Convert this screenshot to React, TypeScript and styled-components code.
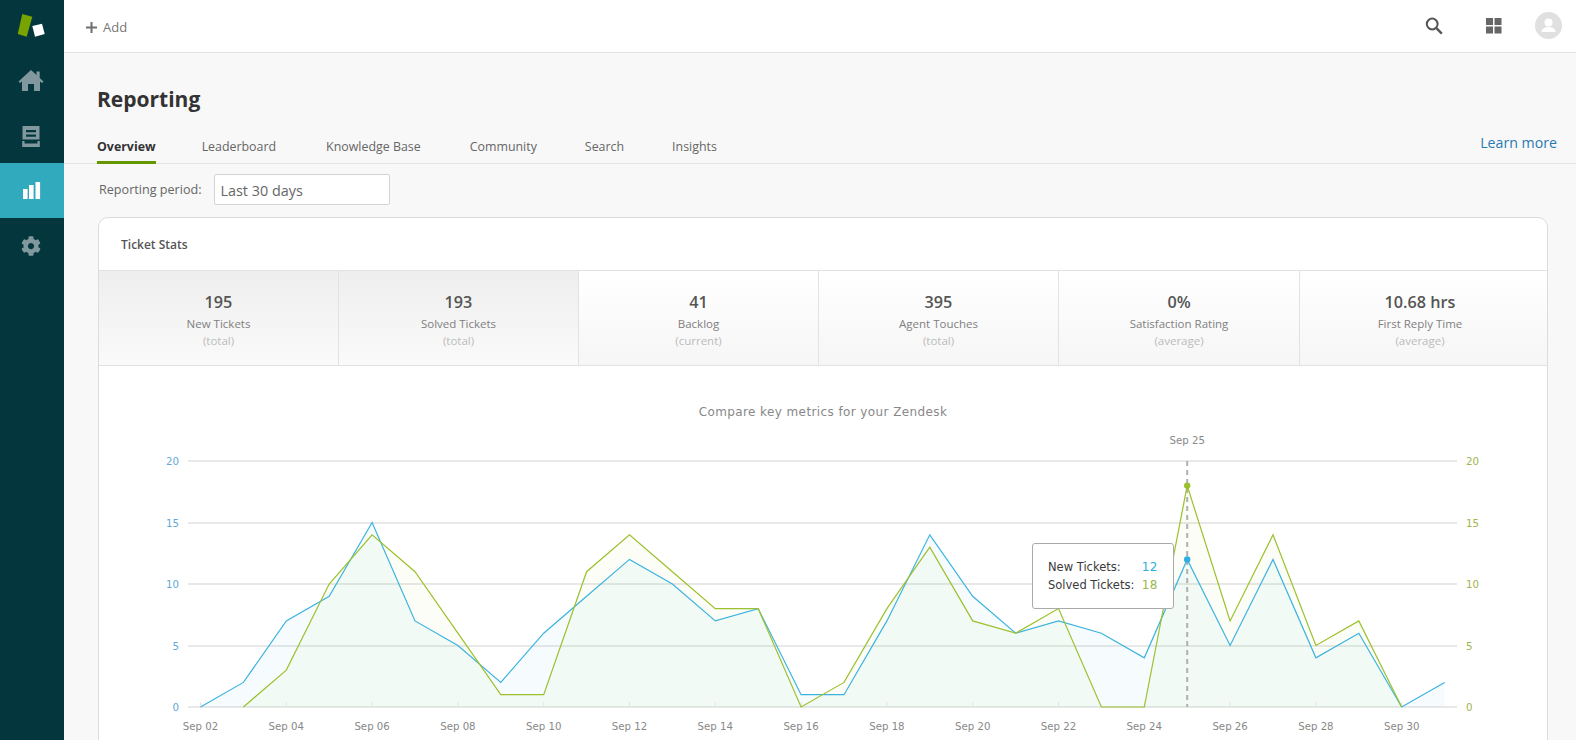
import styled, { createGlobalStyle } from 'styled-components';
import { FaCog } from 'react-icons/fa';

const TABS = ['Overview', 'Leaderboard', 'Knowledge Base', 'Community', 'Search', 'Insights'];

const STATS = [
	{ value: '195', label: 'New Tickets', note: '(total)', active: true },
	{ value: '193', label: 'Solved Tickets', note: '(total)', active: true },
	{ value: '41', label: 'Backlog', note: '(current)', active: false },
	{ value: '395', label: 'Agent Touches', note: '(total)', active: false },
	{ value: '0%', label: 'Satisfaction Rating', note: '(average)', active: false },
	{ value: '10.68 hrs', label: 'First Reply Time', note: '(average)', active: false },
];

// daily values, index 0 is Sep 02
const NEW_TICKETS = [0, 2, 7, 9, 15, 7, 5, 2, 6, 9, 12, 10, 7, 8, 1, 1, 7, 14, 9, 6, 7, 6, 4, 12, 5, 12, 4, 6, 0, 2];
const SOLVED_TICKETS = [0, 3, 10, 14, 11, 6, 1, 1, 11, 14, 11, 8, 8, 0, 2, 8, 13, 7, 6, 8, 0, 0, 18, 7, 14, 5, 7, 0];

const X0 = 101.5;
const STEP = 42.9;
const Y0 = 282;
const UNIT = 12.3;
const GRID_LEFT = 89;
const GRID_RIGHT = 1358;

const BLUE = '#3cb3de';
const GREEN = '#9cc02e';

const xAt = (i: number) => X0 + i * STEP;
const yAt = (v: number) => Y0 - v * UNIT;

function linePoints(values: number[], start: number) {
	return values.map((v, i) => `${xAt(start + i).toFixed(1)},${yAt(v).toFixed(1)}`).join(' ');
}

function areaPoints(values: number[], start: number) {
	const last = start + values.length - 1;
	return `${xAt(start)},${Y0} ${linePoints(values, start)} ${xAt(last)},${Y0}`;
}

function Chart() {
	return (
		<ChartSvg viewBox='0 0 1447 320'>
			{[0, 5, 10, 15, 20].map((v) => (
				<g key={v}>
					<line
						x1={GRID_LEFT}
						x2={GRID_RIGHT}
						y1={Math.round(yAt(v))}
						y2={Math.round(yAt(v))}
						stroke='#e8e8e8'
						strokeWidth='2'
					/>
					<AxisText x={80} y={yAt(v) + 4} textAnchor='end' fill='#62a9d6'>
						{v}
					</AxisText>
					<AxisText x={1367} y={yAt(v) + 4} fill='#9db54c'>
						{v}
					</AxisText>
				</g>
			))}
			<polygon points={areaPoints(NEW_TICKETS, 0)} fill='#23afeb' fillOpacity='0.045' />
			<polygon points={areaPoints(SOLVED_TICKETS, 1)} fill='#a0c022' fillOpacity='0.04' />
			{NEW_TICKETS.map((_, i) =>
				i % 2 === 0 ? (
					<g key={i}>
						<line x1={xAt(i)} x2={xAt(i)} y1={Y0 - 5} y2={Y0} stroke='#e4e4e4' />
						{i < 30 && (
							<AxisText x={xAt(i)} y={Y0 + 23} textAnchor='middle' fill='#888'>
								{`Sep ${String(i + 2).padStart(2, '0')}`}
							</AxisText>
						)}
					</g>
				) : null,
			)}
			<line x1={xAt(23)} x2={xAt(23)} y1={yAt(20)} y2={Y0} stroke='#b0b0b0' strokeWidth='2' strokeDasharray='5 4' />
			<polyline points={linePoints(NEW_TICKETS, 0)} fill='none' stroke={BLUE} strokeWidth='1.2' />
			<polyline points={linePoints(SOLVED_TICKETS, 1)} fill='none' stroke={GREEN} strokeWidth='1.2' />
			<circle cx={xAt(23)} cy={yAt(18)} r='3.2' fill={GREEN} />
			<circle cx={xAt(23)} cy={yAt(12)} r='3.2' fill='#2eaee0' />
			<AxisText x={xAt(23)} y={19} textAnchor='middle' fill='#888'>
				Sep 25
			</AxisText>
		</ChartSvg>
	);
}

function LogoMark() {
	return (
		<svg width='64' height='50' viewBox='0 0 64 50'>
			<polygon points='22.3,14 32.3,16.7 26.7,36.7 17.7,34' fill='#78a300' />
			<polygon points='32.3,26 42,23.7 44.7,34 35,36.7' fill='#fff' />
		</svg>
	);
}

export default function App() {
	return (
		<Shell>
			<GlobalStyle />
			<Rail>
				<LogoSlot>
					<LogoMark />
				</LogoSlot>
				<RailItem>
					<svg width='26' height='24' viewBox='0 0 26 24' fill='#81999e'>
						<path d='M13 1l5.5 5V2.5h3.2V9L25.5 12.4 24 14l-2-1.6V22h-6v-7h-6v7H4v-9.600L2 14 .5 12.4z' />
					</svg>
				</RailItem>
				<RailItem>
					<svg width='20' height='24' viewBox='0 0 20 24' fill='#81999e'>
						<path
							fillRule='evenodd'
							d='M1.500 2h17v13.500h-17zM5 6h10v2.200H5zM5 10.500h10v2.200H5z'
						/>
						<path d='M1.200 17h2.300v2.500h13V17h2.300v6H1.200z' />
					</svg>
				</RailItem>
				<RailItem $active>
					<svg width='20' height='20' viewBox='0 0 20 20' fill='#fff'>
						<rect x='2' y='9' width='4.600' height='10' />
						<rect x='8' y='5' width='4.600' height='14' />
						<rect x='14.500' y='2' width='4.600' height='17' />
					</svg>
				</RailItem>
				<RailItem>
					<GearSlot>
						<FaCog size={20} color='#81999e' />
					</GearSlot>
				</RailItem>
			</Rail>
			<Main>
				<TopBar>
					<AddButton>
						<svg width='11' height='11' viewBox='0 0 11 11' fill='#6f6f6f'>
							<rect x='4.500' width='2' height='11' />
							<rect y='4.500' width='11' height='2' />
						</svg>
						Add
					</AddButton>
					<TopActions>
						<svg width='20' height='20' viewBox='0 0 20 20' fill='none' stroke='#555'>
							<circle cx='8.200' cy='8' r='5.400' strokeWidth='2' />
							<line x1='12.400' y1='12.200' x2='17.800' y2='17.600' strokeWidth='2.400' />
						</svg>
						<GridIcon width='16' height='16' viewBox='0 0 16 16' fill='#666'>
							<rect width='7' height='7' />
							<rect x='8.500' width='7' height='7' />
							<rect y='8.500' width='7' height='7' />
							<rect x='8.500' y='8.500' width='7' height='7' />
						</GridIcon>
						<Avatar>
							<svg width='27' height='27' viewBox='0 0 27 27' fill='#fff'>
								<circle cx='13.500' cy='10.500' r='4' />
								<path d='M6.500 20c0-3.500 3.500-5 7-5s7 1.500 7 5z' />
							</svg>
						</Avatar>
					</TopActions>
				</TopBar>
				<Title>Reporting</Title>
				<TabRow>
					{TABS.map((tab, idx) => (
						<Tab key={tab} $active={idx === 0}>
							{tab}
						</Tab>
					))}
					<LearnMore>Learn more</LearnMore>
				</TabRow>
				<PeriodRow>
					<PeriodLabel>Reporting period:</PeriodLabel>
					<PeriodSelect>Last 30 days</PeriodSelect>
				</PeriodRow>
				<Card>
					<CardHeading>Ticket Stats</CardHeading>
					<StatsRow>
						{STATS.map((stat) => (
							<StatCell key={stat.label} $active={stat.active}>
								<StatValue>{stat.value}</StatValue>
								<StatLabel>{stat.label}</StatLabel>
								<StatNote>{stat.note}</StatNote>
							</StatCell>
						))}
					</StatsRow>
					<ChartTitle>Compare key metrics for your Zendesk</ChartTitle>
					<ChartWrap>
						<Chart />
						<Tooltip>
							<span>New Tickets:</span>
							<TooltipValue $color='#2eaee0'>12</TooltipValue>
							<span>Solved Tickets:</span>
							<TooltipValue $color='#9db54c'>18</TooltipValue>
						</Tooltip>
					</ChartWrap>
				</Card>
			</Main>
		</Shell>
	);
}

const GlobalStyle = createGlobalStyle`
	html, body {
		margin: 0;
		height: 100%;
		overflow: hidden;
		background: #f8f8f8;
		font-family: 'Open Sans', sans-serif;
	}
`;

const Shell = styled.div`
	display: flex;
	height: 740px;
	overflow: hidden;
`;

const Rail = styled.nav`
	flex: 0 0 64px;
	background: #03363d;
`;

const LogoSlot = styled.div`
	height: 54px;

	svg {
		display: block;
	}
`;

const RailItem = styled.div<{ $active?: boolean }>`
	display: flex;
	align-items: center;
	justify-content: center;
	box-sizing: border-box;
	height: 54.500px;
	padding-right: 2px;
	background: ${(p) => (p.$active ? '#30aabc' : 'transparent')};
`;

const GearSlot = styled.div`
	display: flex;
	padding-top: 2px;
`;

const Main = styled.main`
	flex: 1;
	min-width: 0;
`;

const TopBar = styled.header`
	display: flex;
	align-items: center;
	justify-content: space-between;
	height: 52px;
	padding: 0 14px 0 22px;
	background: #fff;
	border-bottom: 1px solid #e2e2e2;
`;

const AddButton = styled.div`
	display: flex;
	align-items: center;
	gap: 6px;
	padding-top: 2px;
	font-size: 13px;
	color: #777;
`;

const TopActions = styled.div`
	display: flex;
	align-items: center;
	gap: 42px;
	padding-bottom: 1px;
`;

const GridIcon = styled.svg`
	margin-right: -9px;
`;

const Avatar = styled.div`
	width: 27px;
	height: 27px;
	border-radius: 50%;
	background: #e0e0e0;

	svg {
		display: block;
	}
`;

const Title = styled.h1`
	margin: 0;
	padding: 31px 0 0 33px;
	font-size: 21px;
	line-height: 30px;
	font-weight: 700;
	color: #333;
`;

const TabRow = styled.div`
	display: flex;
	align-items: flex-end;
	gap: 48px;
	height: 49px;
	padding: 0 19px 0 33px;
	border-bottom: 1px solid #e4e4e4;
`;

const Tab = styled.div<{ $active?: boolean }>`
	box-sizing: border-box;
	height: 33px;
	margin-bottom: -1px;
	padding-top: 2px;
	font-size: 12.400px;
	line-height: 28px;
	font-weight: ${(p) => (p.$active ? 700 : 400)};
	color: ${(p) => (p.$active ? '#333' : '#666')};
	border-bottom: 3px solid ${(p) => (p.$active ? '#659700' : 'transparent')};

	&:nth-child(2) {
		margin-left: -2px;
		margin-right: 2px;
	}

	&:nth-child(3) {
		margin-right: 1px;
	}
`;

const LearnMore = styled.a`
	align-self: center;
	margin-left: auto;
	padding-top: 7px;
	font-size: 14.200px;
	color: #2a78b0;
`;

const PeriodRow = styled.div`
	display: flex;
	align-items: center;
	gap: 13px;
	margin: 10px 0 12px 35px;
`;

const PeriodLabel = styled.span`
	font-size: 12.600px;
	color: #666;
`;

const PeriodSelect = styled.div`
	box-sizing: border-box;
	width: 176px;
	height: 31px;
	padding-left: 5px;
	font-size: 14.400px;
	line-height: 31px;
	color: #666;
	background: #fff;
	border: 1px solid #d4d4d4;
	border-radius: 2px;
`;

const Card = styled.section`
	width: 1448px;
	margin-left: 34px;
	background: #fff;
	border: 1px solid #dcdcdc;
	border-radius: 10px 10px 0 0;
`;

const CardHeading = styled.h2`
	margin: 0;
	height: 52px;
	padding-left: 22px;
	font-size: 12px;
	line-height: 53px;
	font-weight: 600;
	color: #555;
`;

const StatsRow = styled.div`
	display: grid;
	grid-template-columns: repeat(4, 240px) 241px 1fr;
	height: 94px;
	border-top: 1px solid #e2e2e2;
	border-bottom: 1px solid #e2e2e2;
`;

const StatCell = styled.div<{ $active: boolean }>`
	display: flex;
	flex-direction: column;
	align-items: center;
	box-sizing: border-box;
	padding-top: 19px;
	text-align: center;
	background: linear-gradient(
		${(p) => (p.$active ? '#eeeeee, #fafafa' : '#ffffff, #f6f6f6')}
	);
	border-right: 1px solid #e2e2e2;

	&:last-child {
		padding-right: 7px;
		border-right: 0;
	}
`;

const StatValue = styled.div`
	font-size: 16.200px;
	line-height: 24px;
	font-weight: 600;
	color: #555;
`;

const StatLabel = styled.div`
	font-size: 11.500px;
	line-height: 20px;
	color: #808080;
`;

const StatNote = styled.div`
	font-size: 11.500px;
	line-height: 13px;
	color: #bbb;
`;

const ChartTitle = styled.div`
	padding: 37px 0 4px;
	font-family: 'DejaVu Sans', sans-serif;
	font-size: 12px;
	line-height: 18px;
	letter-spacing: 0.4px;
	text-align: center;
	color: #888;
`;

const ChartWrap = styled.div`
	position: relative;
`;

const ChartSvg = styled.svg`
	display: block;
	width: 1447px;
	height: 320px;
`;

const AxisText = styled.text`
	font-family: 'DejaVu Sans', sans-serif;
	font-size: 10.200px;
`;

const Tooltip = styled.div`
	position: absolute;
	left: 933px;
	top: 118px;
	box-sizing: border-box;
	display: grid;
	grid-template-columns: 1fr auto;
	align-content: center;
	row-gap: 2px;
	width: 142px;
	height: 66px;
	padding: 0 15px;
	font-family: 'DejaVu Sans', sans-serif;
	font-size: 11.500px;
	line-height: 16px;
	color: #3a3a3a;
	background: #fff;
	border: 1px solid #aaa;
	border-radius: 3px;
`;

const TooltipValue = styled.span<{ $color: string }>`
	font-size: 12px;
	letter-spacing: 0.5px;
	text-align: right;
	color: ${(p) => p.$color};
`;
